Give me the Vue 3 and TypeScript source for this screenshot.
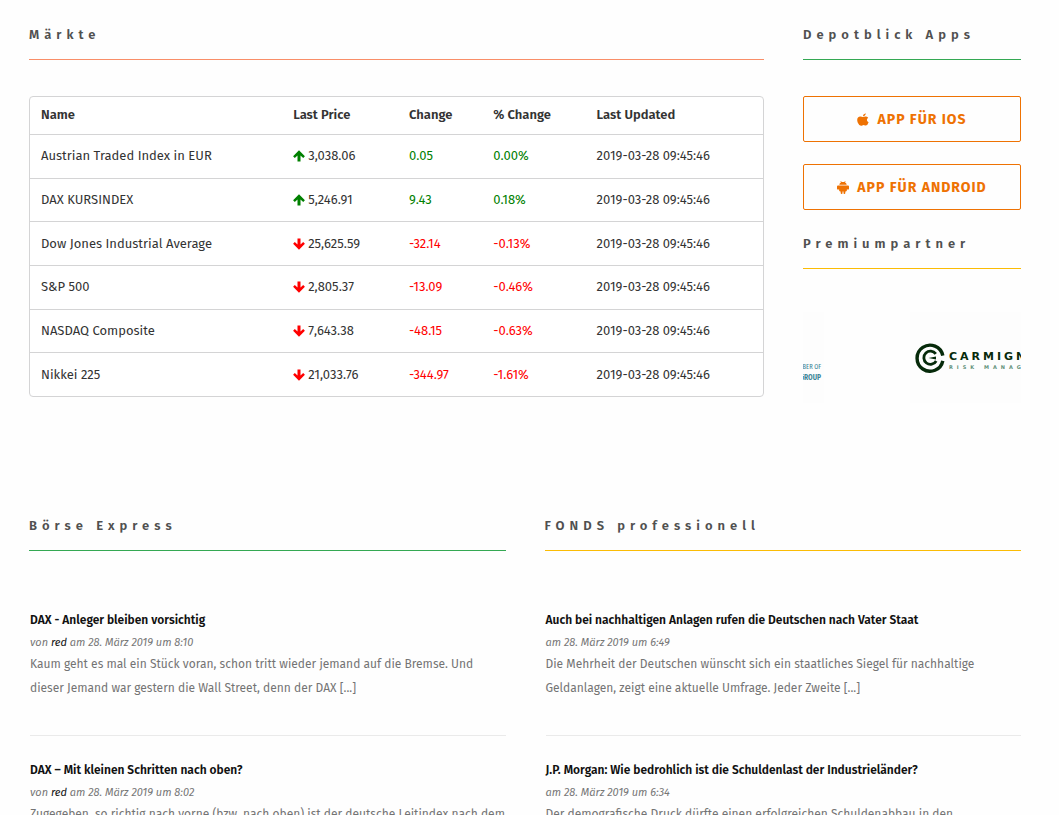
<script setup lang="ts">
interface Quote {
  name: string
  price: string
  change: string
  percent: string
  updated: string
  up: boolean
}

interface Article {
  title: string
  author?: string
  date: string
  lines: string[]
}

interface Feed {
  id: string
  name: string
  articles: Article[]
}

const updated = '2019-03-28 09:45:46'

const quotes: Quote[] = [
  { name: 'Austrian Traded Index in EUR', price: '3,038.06', change: '0.05', percent: '0.00%', updated, up: true },
  { name: 'DAX KURSINDEX', price: '5,246.91', change: '9.43', percent: '0.18%', updated, up: true },
  { name: 'Dow Jones Industrial Average', price: '25,625.59', change: '-32.14', percent: '-0.13%', updated, up: false },
  { name: 'S&P 500', price: '2,805.37', change: '-13.09', percent: '-0.46%', updated, up: false },
  { name: 'NASDAQ Composite', price: '7,643.38', change: '-48.15', percent: '-0.63%', updated, up: false },
  { name: 'Nikkei 225', price: '21,033.76', change: '-344.97', percent: '-1.61%', updated, up: false },
]

const feeds: Feed[] = [
  {
    id: 'green',
    name: 'Börse Express',
    articles: [
      {
        title: 'DAX - Anleger bleiben vorsichtig',
        author: 'red',
        date: 'am 28. März 2019 um 8:10',
        lines: [
          'Kaum geht es mal ein Stück voran, schon tritt wieder jemand auf die Bremse. Und',
          'dieser Jemand war gestern die Wall Street, denn der DAX [...]',
        ],
      },
      {
        title: 'DAX – Mit kleinen Schritten nach oben?',
        author: 'red',
        date: 'am 28. März 2019 um 8:02',
        lines: ['Zugegeben, so richtig nach vorne (bzw. nach oben) ist der deutsche Leitindex nach dem'],
      },
    ],
  },
  {
    id: 'yellow',
    name: 'FONDS professionell',
    articles: [
      {
        title: 'Auch bei nachhaltigen Anlagen rufen die Deutschen nach Vater Staat',
        date: 'am 28. März 2019 um 6:49',
        lines: [
          'Die Mehrheit der Deutschen wünscht sich ein staatliches Siegel für nachhaltige',
          'Geldanlagen, zeigt eine aktuelle Umfrage. Jeder Zweite [...]',
        ],
      },
      {
        title: 'J.P. Morgan: Wie bedrohlich ist die Schuldenlast der Industrieländer?',
        date: 'am 28. März 2019 um 6:34',
        lines: ['Der demografische Druck dürfte einen erfolgreichen Schuldenabbau in den'],
      },
    ],
  },
]
</script>

<template>
  <main class="page">
    <div class="top">
      <section>
        <h2 class="heading orange">Märkte</h2>
        <table class="quotes">
          <thead>
            <tr>
              <th class="c-name">Name</th>
              <th class="c-price">Last Price</th>
              <th class="c-change">Change</th>
              <th class="c-percent">% Change</th>
              <th>Last Updated</th>
            </tr>
          </thead>
          <tbody>
            <tr v-for="q in quotes" :key="q.name">
              <td>{{ q.name }}</td>
              <td>
                <svg class="arrow" :class="q.up ? 'up' : 'down'" viewBox="0 0 12 12" aria-hidden="true">
                  <path d="M6 0.3 L11.9 6.2 L10.2 7.9 L7.5 5.4 V11.5 H4.5 V5.4 L1.8 7.9 L0.1 6.2 Z" />
                </svg>{{ q.price }}
              </td>
              <td :class="q.up ? 'up' : 'down'">{{ q.change }}</td>
              <td :class="q.up ? 'up' : 'down'">{{ q.percent }}</td>
              <td>{{ q.updated }}</td>
            </tr>
          </tbody>
        </table>
      </section>

      <aside>
        <h2 class="heading green">Depotblick Apps</h2>
        <div class="apps">
          <a class="app" href="#ios">
            <svg viewBox="0 0 12 13" aria-hidden="true">
              <path d="M11.6 9.3 Q10.6 12.6 8.7 12.6 Q8 12.6 7.4 12.3 Q6.3 11.9 5.3 12.4 Q4.6 12.7 4 12.7 Q2 12.7 0.8 9.8 Q-0.5 6.5 1 4.6 Q2.5 2.9 4.8 3.8 Q6 4.3 7.1 3.8 Q9.6 2.8 11.2 4.8 Q9.9 5.7 9.9 7 Q9.9 8.5 11.6 9.3 Z M8.7 0.2 Q8.8 1.5 7.9 2.5 Q7.1 3.3 5.8 3.4 Q5.8 1 8.7 0.2 Z" />
            </svg>
            <span>APP FÜR IOS</span>
          </a>
          <a class="app" href="#android">
            <svg viewBox="0 0 12 13" aria-hidden="true">
              <path d="M2.3 3.7 Q2.5 2.1 4.1 1.3 L3.4 0.3 L3.9 0 L4.7 1.1 Q6 0.7 7.3 1.1 L8.1 0 L8.6 0.3 L7.9 1.3 Q9.5 2.1 9.7 3.7 Z M1 4.4 H11 Q12 4.5 12 5.6 V7.4 Q12 8.6 11 8.6 Q10.4 8.6 9.9 8.2 V9.3 Q9.9 10.4 8.9 10.4 H8.3 V12 Q8.3 12.9 7.4 12.9 Q6.5 12.9 6.5 12 V10.4 H5.5 V12 Q5.5 12.9 4.6 12.9 Q3.7 12.9 3.7 12 V10.4 H3.1 Q2.1 10.4 2.1 9.3 V8.2 Q1.6 8.6 1 8.6 Q0 8.6 0 7.4 V5.6 Q0 4.5 1 4.4 Z" />
            </svg>
            <span>APP FÜR ANDROID</span>
          </a>
        </div>

        <h2 class="heading yellow">Premiumpartner</h2>
        <div class="partners">
          <div class="partner member">
            <span>MBER OF</span>
            <strong>GROUP</strong>
          </div>
          <div class="partner carmignac">
            <svg viewBox="0 0 30 30" aria-hidden="true">
              <g fill="none" stroke="#062a0a">
                <path d="M27.8 12.6 A13 13 0 1 0 27.8 17.8" stroke-width="3.4" />
                <path d="M20.8 10.9 A6.6 6.6 0 1 0 21.2 18" stroke-width="2.8" />
              </g>
              <path d="M13.5 14.9 L21 13.6 V16.4 Z" fill="#062a0a" />
            </svg>
            <div class="wordmark">
              <span class="brand">CARMIGN</span>
              <span class="claim">RISK MANAG</span>
            </div>
          </div>
        </div>
      </aside>
    </div>

    <div class="news">
      <section v-for="feed in feeds" :key="feed.id">
        <h2 class="heading" :class="feed.id">{{ feed.name }}</h2>
        <div class="articles">
          <article v-for="a in feed.articles" :key="a.title">
            <h3><a href="#artikel">{{ a.title }}</a></h3>
            <p class="meta"><template v-if="a.author">von <a href="#autor">{{ a.author }}</a>&nbsp;</template>{{ a.date }}</p>
            <p class="excerpt"><span v-for="line in a.lines" :key="line">{{ line }}</span></p>
          </article>
        </div>
      </section>
    </div>
  </main>
</template>

<style>
body {
  margin: 0;
  background: #fefefe;
}
</style>

<style scoped>
.page {
  padding: 24px 38px 0 29px;
  font-family: "Fira Sans", "Noto Sans", sans-serif;
  font-size: 13px;
  color: #333;
}

.top {
  display: grid;
  grid-template-columns: minmax(0, 735fr) minmax(0, 218fr);
  gap: 39px;
}

.heading {
  margin: 0 0 36px;
  padding-bottom: 13px;
  border-bottom: 1px solid;
  font-size: 13px;
  line-height: 22px;
  font-weight: 600;
  letter-spacing: 5px;
  white-space: nowrap;
}
.heading::first-line {
  color: #505050;
}
.orange { border-color: #f98e68; }
.green { border-color: #34a853; }
.yellow { border-color: #fbbc05; }

.quotes {
  width: 100%;
  height: 301px;
  table-layout: fixed;
  border: 1px solid #d4d4d5;
  border-radius: 4px;
  border-spacing: 0;
  background: #fff;
}
.quotes th,
.quotes td {
  box-sizing: border-box;
  padding: 0 11px;
  text-align: left;
  white-space: nowrap;
  line-height: 20px;
}
.quotes th {
  height: 37px;
  padding-bottom: 2px;
  font-weight: 600;
}
.quotes td {
  height: 43px;
  border-top: 1px solid #d4d4d5;
}
.c-name { width: 34.4%; }
.c-price { width: 15.8%; }
.c-change { width: 11.5%; }
.c-percent { width: 14.1%; }
.arrow {
  width: 12px;
  height: 12px;
  margin-right: 3px;
  vertical-align: -2px;
  fill: currentColor;
}
.up { color: green; }
.down { color: red; }
.arrow.down { transform: rotate(180deg); }

.apps {
  display: grid;
  gap: 22px;
  margin-bottom: 23px;
}
.app {
  display: flex;
  align-items: center;
  justify-content: center;
  gap: 8px;
  height: 44px;
  border: 1px solid #ee7203;
  border-radius: 2px;
  color: #ee7203;
  font-size: 14px;
  font-weight: 700;
  letter-spacing: 1px;
  text-decoration: none;
  white-space: nowrap;
}
.app svg {
  width: 12px;
  height: 13px;
  fill: currentColor;
}

.partners {
  display: flex;
  justify-content: space-between;
  margin-top: 43px;
  overflow: hidden;
}
.partner {
  height: 91px;
  background: #fdfdfd;
  overflow: hidden;
  white-space: nowrap;
}
.member {
  display: flex;
  flex-direction: column;
  align-items: flex-end;
  justify-content: center;
  width: 18px;
  padding: 29px 3px 0 0;
  height: 62px;
  color: #3d8799;
  font-family: "Fira Sans Extra Condensed", "Fira Sans Condensed", sans-serif;
  font-size: 7px;
  line-height: 11px;
}
.member strong {
  font-size: 8px;
  font-weight: 600;
}
.carmignac {
  display: flex;
  align-items: center;
  gap: 4px;
  width: 106px;
  padding-left: 5px;
}
.carmignac svg {
  flex: none;
  width: 30px;
  height: 30px;
}
.wordmark {
  display: flex;
  flex-direction: column;
  padding-top: 8px;
  font-family: "DejaVu Sans", sans-serif;
  color: #062a0a;
}
.brand {
  font-size: 11px;
  line-height: 12px;
  font-weight: 700;
  letter-spacing: 3px;
}
.claim {
  font-size: 5px;
  line-height: 9px;
  font-weight: 700;
  letter-spacing: 4px;
  color: #5f9079;
}

.news {
  display: grid;
  grid-template-columns: repeat(2, minmax(0, 1fr));
  gap: 39px;
  margin-top: 112px;
}
.articles {
  margin: 57px 0 0 1px;
}
article {
  padding-bottom: 35px;
}
article + article {
  padding-top: 22px;
  border-top: 1px solid #eaeaea;
}
article h3,
article p {
  margin: 0;
  white-space: nowrap;
}
article h3 {
  font-size: 12px;
  line-height: 24px;
  font-weight: 600;
}
article a {
  color: #111;
  text-decoration: none;
}
.meta {
  padding-top: 2px;
  font-size: 11px;
  line-height: 18px;
  font-style: italic;
  color: #777;
}
.excerpt {
  font-size: 12px;
  line-height: 24px;
  color: #747474;
}
.excerpt span {
  display: block;
}
</style>
